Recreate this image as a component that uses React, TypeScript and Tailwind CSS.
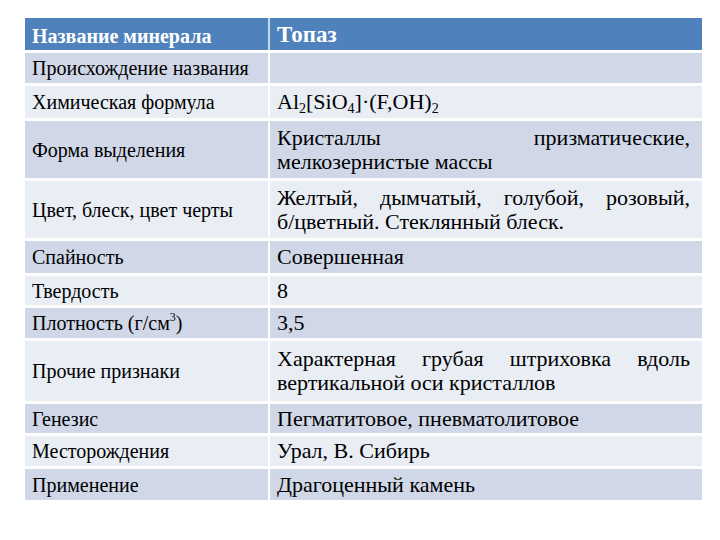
import type { ReactNode } from "react";

type Row = {
  label: ReactNode;
  value: ReactNode;
  h: string;
  tone: "dark" | "light";
};

const sub = "text-[14px] relative top-[4px] align-baseline";

const rows: Row[] = [
  { label: "Происхождение названия", value: "", h: "h-[30px]", tone: "dark" },
  {
    label: "Химическая формула",
    value: (
      <>
        Al<sub className={sub}>2</sub>[SiO<sub className={sub}>4</sub>]·(F,OH)<sub className={sub}>2</sub>
      </>
    ),
    h: "h-[32px]",
    tone: "light",
  },
  {
    label: "Форма выделения",
    value: "Кристаллы призматические, мелкозернистые массы",
    h: "h-[57px]",
    tone: "dark",
  },
  {
    label: "Цвет, блеск, цвет черты",
    value: (
      <>
        Желтый, дымчатый, голубой, розовый, <span className="whitespace-nowrap">б/цветный.</span> Стеклянный блеск.
      </>
    ),
    h: "h-[57px]",
    tone: "light",
  },
  { label: "Спайность", value: "Совершенная", h: "h-[32px]", tone: "dark" },
  { label: "Твердость", value: "8", h: "h-[29px]", tone: "light" },
  {
    label: (
      <>
        Плотность (г/см<sup className="text-[12px] relative -top-[6px] align-baseline">3</sup>)
      </>
    ),
    value: "3,5",
    h: "h-[30px]",
    tone: "dark",
  },
  {
    label: "Прочие признаки",
    value: "Характерная грубая штриховка вдоль вертикальной оси кристаллов",
    h: "h-[60px]",
    tone: "light",
  },
  { label: "Генезис", value: "Пегматитовое, пневматолитовое", h: "h-[29px]", tone: "dark" },
  { label: "Месторождения", value: "Урал, В. Сибирь", h: "h-[30px]", tone: "light" },
  { label: "Применение", value: "Драгоценный камень", h: "h-[31px]", tone: "dark" },
];

export default function App() {
  return (
    <div className="w-[720px] h-[540px] bg-white pt-[18px] pl-[25px] [font-family:'Liberation_Serif',serif] text-black">
      <div className="w-[677px] flex flex-col gap-[3px]">
        <div className="flex h-[32px] bg-[#4f81bd] text-white font-bold">
          <div className="w-[243px] flex items-center pl-[7px] pt-[3px] text-[20px]">Название минерала</div>
          <div className="w-[2px] bg-[#c9d6ea]" />
          <div className="flex-1 flex items-center pl-[7px] pt-[2px] text-[23px]">Топаз</div>
        </div>
        {rows.map((row, i) => (
          <div
            key={i}
            className={`flex ${row.h} ${row.tone === "dark" ? "bg-[#d0d8e8]" : "bg-[#e9edf4]"}`}
          >
            <div className="w-[243px] flex items-center pl-[7px] text-[20px]">{row.label}</div>
            <div className="w-[2px] bg-white" />
            <div className="flex-1 flex items-center pl-[7px] pr-[12px] text-[22px] leading-[24px]">
              <p className="w-full text-justify">{row.value}</p>
            </div>
          </div>
        ))}
      </div>
    </div>
  );
}
